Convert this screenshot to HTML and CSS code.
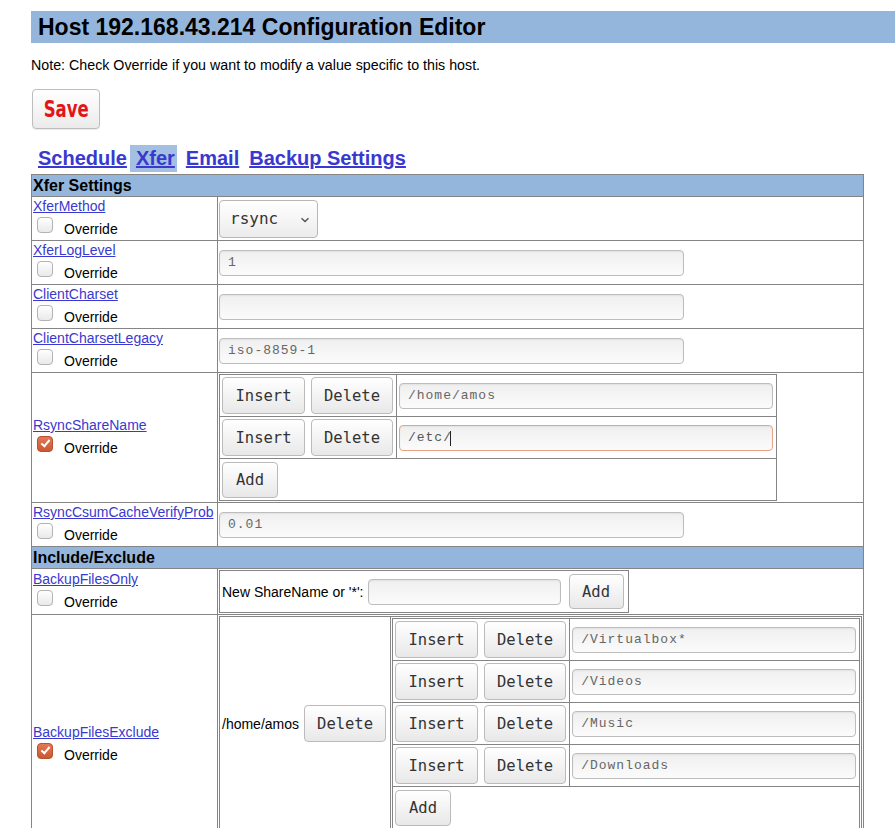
FILE: index.html
```html
<!DOCTYPE html>
<html>
<head>
<meta charset="utf-8">
<title>Host 192.168.43.214 Configuration Editor</title>
<link rel="stylesheet" href="styles.css">
</head>
<body>
<div class="page">
  <h1 class="title">Host 192.168.43.214 Configuration Editor</h1>
  <p class="note">Note: Check Override if you want to modify a value specific to this host.</p>
  <button class="save"><span class="savet">Save</span></button>
  <nav class="tabs">
    <a href="#" class="tab">Schedule</a><a href="#" class="tab active">Xfer</a><a href="#" class="tab">Email</a><a href="#" class="tab">Backup Settings</a>
  </nav>
  <table class="cfg">
    <colgroup><col class="c1"><col class="c2"></colgroup>
    <tr><td colspan="2" class="sect">Xfer Settings</td></tr>
    <tr>
      <td class="name"><a href="#">XferMethod</a><label class="ov"><span class="cb"></span><span class="ovt">Override</span></label></td>
      <td class="val">
        <span class="sel"><select><option>rsync</option></select><svg class="chev" width="10" height="6" viewBox="0 0 10 6"><path d="M1.5 1.2 L5 4.6 L8.5 1.2" fill="none" stroke="#555" stroke-width="1.4"/></svg></span>
      </td>
    </tr>
    <tr>
      <td class="name"><a href="#">XferLogLevel</a><label class="ov"><span class="cb"></span><span class="ovt">Override</span></label></td>
      <td class="val"><input class="txt" type="text" value="1"></td>
    </tr>
    <tr>
      <td class="name"><a href="#">ClientCharset</a><label class="ov"><span class="cb"></span><span class="ovt">Override</span></label></td>
      <td class="val"><input class="txt" type="text" value=""></td>
    </tr>
    <tr>
      <td class="name"><a href="#">ClientCharsetLegacy</a><label class="ov"><span class="cb"></span><span class="ovt">Override</span></label></td>
      <td class="val"><input class="txt" type="text" value="iso-8859-1"></td>
    </tr>
    <tr>
      <td class="name"><a href="#">RsyncShareName</a><label class="ov"><span class="cb on"></span><span class="ovt">Override</span></label></td>
      <td class="val">
        <table class="nest rs">
          <tr>
            <td class="bcell"><div class="btns"><button class="btn ins">Insert</button><button class="btn del">Delete</button></div></td>
            <td class="icell"><input class="txt rsin" type="text" value="/home/amos"></td>
          </tr>
          <tr>
            <td class="bcell"><div class="btns"><button class="btn ins">Insert</button><button class="btn del">Delete</button></div></td>
            <td class="icell"><div class="caretbox"><input class="txt rsin focus" type="text" value="/etc/"><span class="caret"></span></div></td>
          </tr>
          <tr>
            <td colspan="2" class="bcell"><button class="btn add">Add</button></td>
          </tr>
        </table>
      </td>
    </tr>
    <tr>
      <td class="name"><a href="#">RsyncCsumCacheVerifyProb</a><label class="ov"><span class="cb"></span><span class="ovt">Override</span></label></td>
      <td class="val"><input class="txt" type="text" value="0.01"></td>
    </tr>
    <tr><td colspan="2" class="sect">Include/Exclude</td></tr>
    <tr>
      <td class="name"><a href="#">BackupFilesOnly</a><label class="ov"><span class="cb"></span><span class="ovt">Override</span></label></td>
      <td class="val">
        <table class="nest bo">
          <tr>
            <td class="newshare"><span class="nslabel">New ShareName or '*':</span><input class="txt nsin" type="text" value=""><button class="btn add ns">Add</button></td>
          </tr>
        </table>
      </td>
    </tr>
    <tr>
      <td class="name"><a href="#">BackupFilesExclude</a><label class="ov"><span class="cb on"></span><span class="ovt">Override</span></label></td>
      <td class="val">
        <table class="nest hx">
          <tr>
            <td class="sharecell"><div class="sharebox"><span>/home/amos</span><button class="btn del">Delete</button></div></td>
            <td class="listcell">
              <table class="nest inner">
                <tr>
                  <td class="bcell"><div class="btns"><button class="btn ins">Insert</button><button class="btn del">Delete</button></div></td>
                  <td class="icell"><input class="txt exin" type="text" value="/Virtualbox*"></td>
                </tr>
                <tr>
                  <td class="bcell"><div class="btns"><button class="btn ins">Insert</button><button class="btn del">Delete</button></div></td>
                  <td class="icell"><input class="txt exin" type="text" value="/Videos"></td>
                </tr>
                <tr>
                  <td class="bcell"><div class="btns"><button class="btn ins">Insert</button><button class="btn del">Delete</button></div></td>
                  <td class="icell"><input class="txt exin" type="text" value="/Music"></td>
                </tr>
                <tr>
                  <td class="bcell"><div class="btns"><button class="btn ins">Insert</button><button class="btn del">Delete</button></div></td>
                  <td class="icell"><input class="txt exin" type="text" value="/Downloads"></td>
                </tr>
                <tr>
                  <td colspan="2" class="bcell"><button class="btn add">Add</button></td>
                </tr>
              </table>
            </td>
          </tr>
          <tr>
            <td colspan="2" class="newshare"><span class="nslabel">New ShareName or '*':</span><input class="txt nsin" type="text" value=""><button class="btn add ns">Add</button></td>
          </tr>
        </table>
      </td>
    </tr>
  </table>
</div>
</body>
</html>
```

FILE: styles.css
```css
body {
  margin: 0;
  background: #fff;
  color: #000;
  font-family: "Liberation Sans", Arial, sans-serif;
  font-size: 14px;
}

.page {
  padding-left: 31px;
}

.title {
  margin: 11px 0 0;
  height: 32px;
  line-height: 32px;
  padding-left: 7px;
  background: #95b6dc;
  font-size: 23px;
  font-weight: bold;
  white-space: nowrap;
}

.note {
  margin: 14px 0 0;
  line-height: 16px;
  font-size: 14.25px;
}

.save {
  display: block;
  margin: 16px 0 0 1px;
  width: 68px;
  height: 40px;
  padding: 0;
  border: 1px solid #bdbdbd;
  border-radius: 4px;
  background: linear-gradient(#ffffff, #ebebeb);
  box-shadow: 0 1px 1px rgba(0, 0, 0, 0.08);
  color: #e3151a;
  font-family: "DejaVu Sans Condensed", "DejaVu Sans", sans-serif;
  font-stretch: condensed;
  font-weight: bold;
  font-size: 23px;
}

.savet {
  display: inline-block;
  transform: scaleX(0.8);
}

.tabs {
  display: flex;
  margin: 16px 0 0 2px;
  height: 27px;
}

.tab {
  padding: 0 5px;
  font-size: 20px;
  font-weight: bold;
  line-height: 27px;
  color: #3939d0;
  text-decoration: underline;
}

.tab.active {
  background: #a3c0e3;
  padding: 0 2px 0 6px;
  margin: 0 4px 0 -2px;
}

.cfg {
  border-collapse: collapse;
  table-layout: fixed;
  width: 833px;
  margin-top: 2px;
}

.c1 { width: 186px; }

.cfg td {
  border: 1px solid #858585;
  padding: 1px;
}

.sect {
  background: #95b6dc;
  font-weight: bold;
  font-size: 16px;
  line-height: 19px;
}

.name {
  vertical-align: middle;
  overflow: visible;
  white-space: nowrap;
}

.name a {
  display: block;
  line-height: 17px;
  color: #3939d0;
  text-decoration: underline;
}

.ov {
  display: flex;
  align-items: flex-start;
  height: 24px;
}

.cb {
  position: relative;
  box-sizing: border-box;
  width: 16px;
  height: 16px;
  margin: 2px 0 0 4px;
  border: 1px solid #b3b3b3;
  border-radius: 4px;
  background: linear-gradient(#ffffff, #e9e9e9);
}

.cb.on {
  border-color: #b9512f;
  background: linear-gradient(#e27a55, #cc5733);
}

.cb.on::after {
  content: "";
  position: absolute;
  left: 5px;
  top: 1px;
  width: 3px;
  height: 7px;
  border-right: 2px solid #fff;
  border-bottom: 2px solid #fff;
  transform: rotate(40deg);
}

.ovt {
  margin: 6px 0 0 11px;
  line-height: 16px;
}

.val {
  vertical-align: middle;
}

.sel {
  position: relative;
  display: block;
  width: 99px;
  height: 38px;
}

.sel select {
  appearance: none;
  -webkit-appearance: none;
  box-sizing: border-box;
  width: 99px;
  height: 38px;
  padding: 0 0 0 10px;
  border: 1px solid #b8b8b8;
  border-radius: 4px;
  background: linear-gradient(#ffffff, #ececec);
  color: #333;
  font-family: "DejaVu Sans Mono", monospace;
  font-size: 16px;
}

.chev {
  position: absolute;
  left: 81px;
  top: 17px;
}

.txt {
  display: block;
  box-sizing: border-box;
  width: 465px;
  height: 26px;
  margin: 0;
  padding: 0 0 0 8px;
  border: 1px solid #bdbdbd;
  border-radius: 4px;
  background: linear-gradient(#efefef, #fbfbfb);
  box-shadow: inset 0 1px 2px rgba(0, 0, 0, 0.06);
  color: #666;
  font-family: "Liberation Mono", "Courier New", monospace;
  font-size: 13px;
  letter-spacing: 1px;
  outline: none;
}

.txt.focus {
  border-color: #e9a286;
  color: #555;
}

.caretbox {
  position: relative;
}

.caret {
  position: absolute;
  left: 52px;
  top: 6px;
  width: 1px;
  height: 15px;
  background: #222;
}

.nest {
  border-collapse: collapse;
  border: 1px solid #858585;
}

.rs { width: 558px; }

.bcell {
  vertical-align: middle;
}

.btns {
  display: flex;
  gap: 4px;
  align-items: center;
}

.btn {
  display: block;
  box-sizing: border-box;
  height: 37px;
  margin: 1px;
  padding: 0;
  border: 1px solid #bbbbbb;
  border-radius: 4px;
  background: linear-gradient(#ffffff, #e8e8e8);
  color: #333;
  font-family: "DejaVu Sans Mono", monospace;
  font-size: 15.5px;
}

.btn.ins { width: 83px; }
.btn.del { width: 82px; }
.btn.add { width: 56px; height: 36px; margin: 2px 1px 1px; }
.btn.add.ns { width: 55px; height: 35px; margin: 2px 1px 2px 8px; }

.icell {
  vertical-align: middle;
}

.rsin {
  width: 374px;
  margin-left: 1px;
}

.bo { width: 410px; }

.newshare {
  vertical-align: middle;
  white-space: nowrap;
}

.newshare > * {
  vertical-align: middle;
}

.nslabel,
.nsin,
.btn.ns {
  display: inline-block;
}

.nslabel {
  margin-left: 1px;
}

.nsin {
  width: 193px;
  margin-left: 4px;
}

.hx { width: 643px; }

.sharecell {
  width: 168px;
  vertical-align: middle;
}

.sharebox {
  display: flex;
  align-items: center;
  padding-left: 1px;
}

.sharebox .btn {
  margin-left: 5px;
}

.listcell {
  vertical-align: middle;
}

.inner { width: 468px; }

.exin {
  width: 284px;
  margin-left: 1px;
}
```
